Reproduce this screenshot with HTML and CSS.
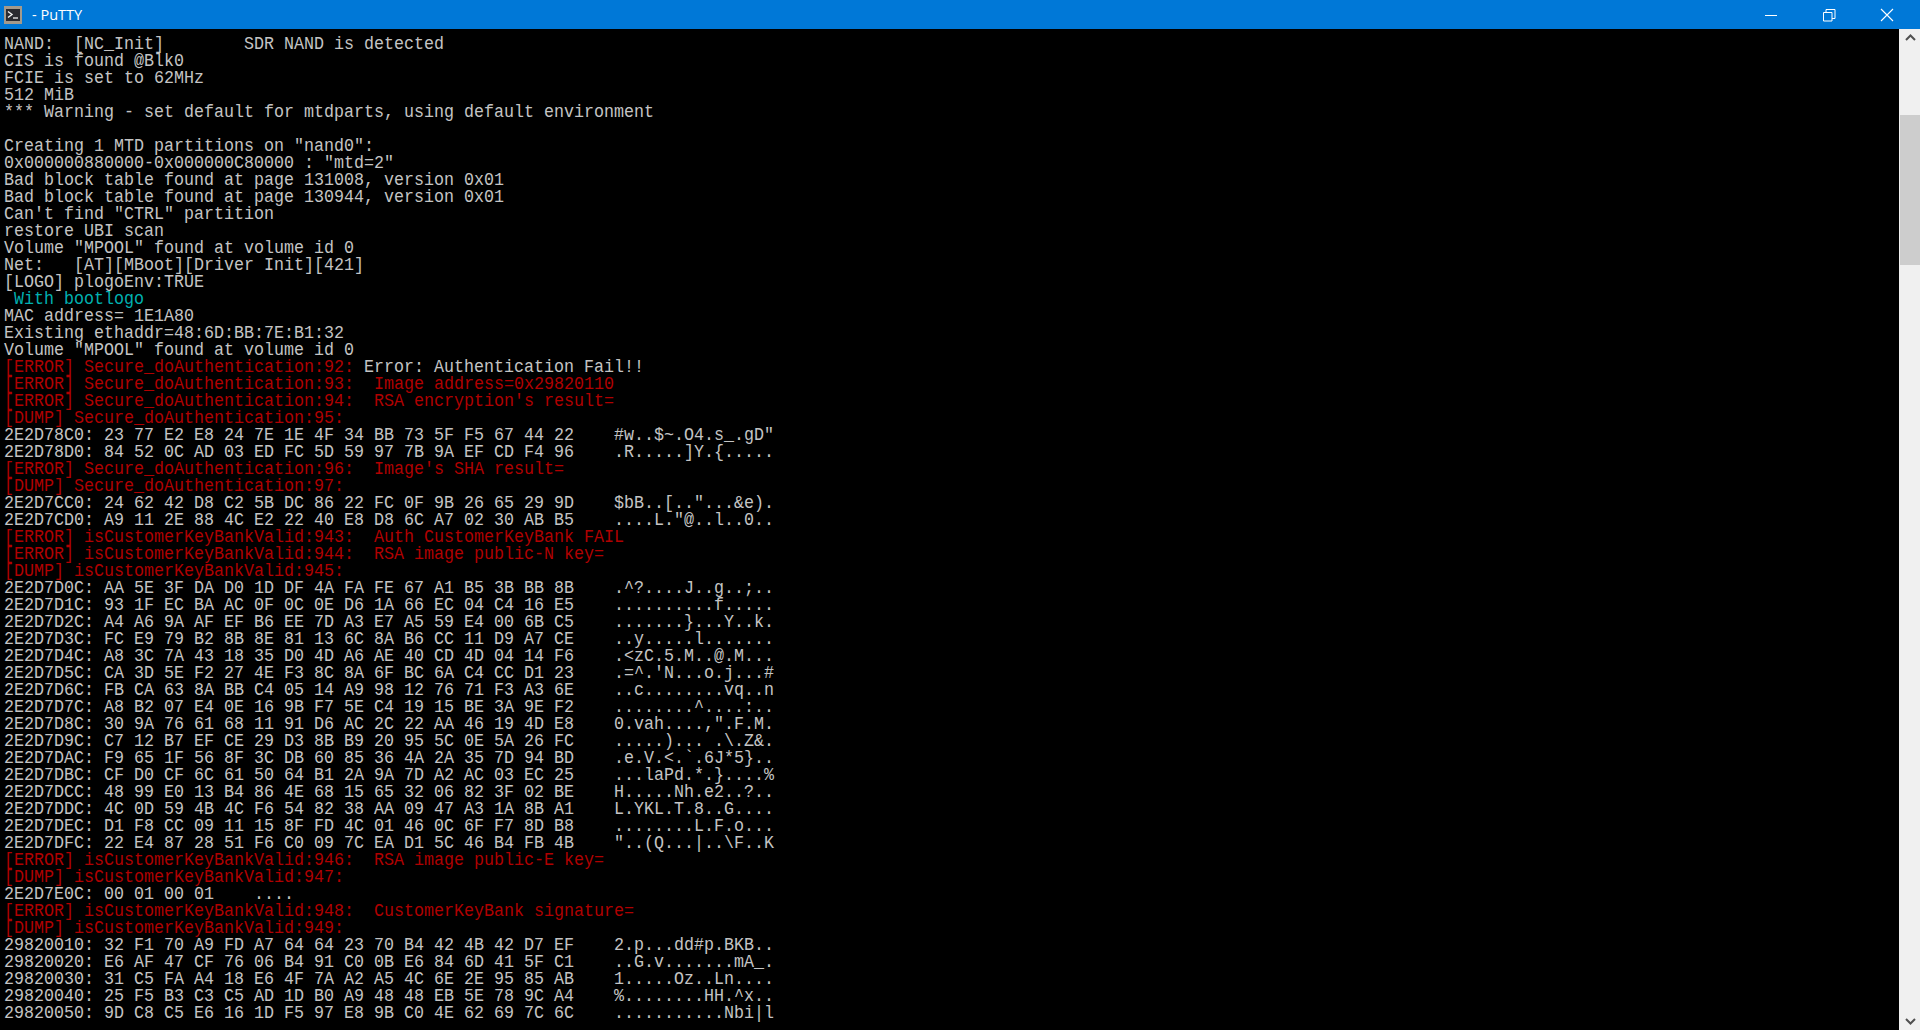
FILE: index.html
```html
<!DOCTYPE html>
<html lang="en">
<head>
<meta charset="utf-8">
<title>- PuTTY</title>
<link rel="stylesheet" href="styles.css">
</head>
<body>
<div class="window">
<header class="titlebar">
<svg class="app-icon" width="18" height="18" viewBox="0 0 18 18"><rect x="0" y="0" width="18" height="18" fill="#a39a8c"/><rect x="2" y="3" width="14" height="12" fill="#2a2a30"/><path d="M4 5.500 8 8.500 4 11.500" fill="none" stroke="#f2f2f2" stroke-width="1.4"/><path d="M9 12h5" stroke="#f2f2f2" stroke-width="1.3"/></svg>
<span class="title">- PuTTY</span>
<div class="controls">
<button class="ctl"><svg width="14" height="14" viewBox="0 0 14 14"><path d="M1 7.500h12" stroke="#fff" fill="none"/></svg></button>
<button class="ctl"><svg width="14" height="14" viewBox="0 0 14 14"><path d="M1.500 4.500h8.500v8.500h-8.500zM4 4.500V1.500h9v9h-3" stroke="#fff" fill="none"/></svg></button>
<button class="ctl"><svg width="14" height="14" viewBox="0 0 14 14"><path d="M1 1l12 12M13 1 1 13" stroke="#fff" stroke-width="1.1" fill="none"/></svg></button>
</div>
</header>
<main class="body">
<pre class="term">NAND:  [NC_Init]        SDR NAND is detected
CIS is found @Blk0
FCIE is set to 62MHz
512 MiB
*** Warning - set default for mtdparts, using default environment

Creating 1 MTD partitions on "nand0":
0x000000880000-0x000000C80000 : "mtd=2"
Bad block table found at page 131008, version 0x01
Bad block table found at page 130944, version 0x01
Can't find "CTRL" partition
restore UBI scan
Volume "MPOOL" found at volume id 0
Net:   [AT][MBoot][Driver Init][421]
[LOGO] plogoEnv:TRUE
<span class="cyan"> With bootlogo</span>
MAC address= 1E1A80
Existing ethaddr=48:6D:BB:7E:B1:32
Volume "MPOOL" found at volume id 0
<span class="red">[ERROR] Secure_doAuthentication:92:</span> Error: Authentication Fail!!
<span class="red">[ERROR] Secure_doAuthentication:93:  Image address=0x29820110</span>
<span class="red">[ERROR] Secure_doAuthentication:94:  RSA encryption's result=</span>
<span class="red">[DUMP] Secure_doAuthentication:95:</span>
2E2D78C0: 23 77 E2 E8 24 7E 1E 4F 34 BB 73 5F F5 67 44 22    #w..$~.O4.s_.gD"
2E2D78D0: 84 52 0C AD 03 ED FC 5D 59 97 7B 9A EF CD F4 96    .R.....]Y.{.....
<span class="red">[ERROR] Secure_doAuthentication:96:  Image's SHA result=</span>
<span class="red">[DUMP] Secure_doAuthentication:97:</span>
2E2D7CC0: 24 62 42 D8 C2 5B DC 86 22 FC 0F 9B 26 65 29 9D    $bB..[.."...&amp;e).
2E2D7CD0: A9 11 2E 88 4C E2 22 40 E8 D8 6C A7 02 30 AB B5    ....L."@..l..0..
<span class="red">[ERROR] isCustomerKeyBankValid:943:  Auth CustomerKeyBank FAIL</span>
<span class="red">[ERROR] isCustomerKeyBankValid:944:  RSA image public-N key=</span>
<span class="red">[DUMP] isCustomerKeyBankValid:945:</span>
2E2D7D0C: AA 5E 3F DA D0 1D DF 4A FA FE 67 A1 B5 3B BB 8B    .^?....J..g..;..
2E2D7D1C: 93 1F EC BA AC 0F 0C 0E D6 1A 66 EC 04 C4 16 E5    ..........f.....
2E2D7D2C: A4 A6 9A AF EF B6 EE 7D A3 E7 A5 59 E4 00 6B C5    .......}...Y..k.
2E2D7D3C: FC E9 79 B2 8B 8E 81 13 6C 8A B6 CC 11 D9 A7 CE    ..y.....l.......
2E2D7D4C: A8 3C 7A 43 18 35 D0 4D A6 AE 40 CD 4D 04 14 F6    .&lt;zC.5.M..@.M...
2E2D7D5C: CA 3D 5E F2 27 4E F3 8C 8A 6F BC 6A C4 CC D1 23    .=^.'N...o.j...#
2E2D7D6C: FB CA 63 8A BB C4 05 14 A9 98 12 76 71 F3 A3 6E    ..c........vq..n
2E2D7D7C: A8 B2 07 E4 0E 16 9B F7 5E C4 19 15 BE 3A 9E F2    ........^....:..
2E2D7D8C: 30 9A 76 61 68 11 91 D6 AC 2C 22 AA 46 19 4D E8    0.vah....,".F.M.
2E2D7D9C: C7 12 B7 EF CE 29 D3 8B B9 20 95 5C 0E 5A 26 FC    .....)... .\.Z&amp;.
2E2D7DAC: F9 65 1F 56 8F 3C DB 60 85 36 4A 2A 35 7D 94 BD    .e.V.&lt;.`.6J*5}..
2E2D7DBC: CF D0 CF 6C 61 50 64 B1 2A 9A 7D A2 AC 03 EC 25    ...laPd.*.}....%
2E2D7DCC: 48 99 E0 13 B4 86 4E 68 15 65 32 06 82 3F 02 BE    H.....Nh.e2..?..
2E2D7DDC: 4C 0D 59 4B 4C F6 54 82 38 AA 09 47 A3 1A 8B A1    L.YKL.T.8..G....
2E2D7DEC: D1 F8 CC 09 11 15 8F FD 4C 01 46 0C 6F F7 8D B8    ........L.F.o...
2E2D7DFC: 22 E4 87 28 51 F6 C0 09 7C EA D1 5C 46 B4 FB 4B    "..(Q...|..\F..K
<span class="red">[ERROR] isCustomerKeyBankValid:946:  RSA image public-E key=</span>
<span class="red">[DUMP] isCustomerKeyBankValid:947:</span>
2E2D7E0C: 00 01 00 01    ....
<span class="red">[ERROR] isCustomerKeyBankValid:948:  CustomerKeyBank signature=</span>
<span class="red">[DUMP] isCustomerKeyBankValid:949:</span>
29820010: 32 F1 70 A9 FD A7 64 64 23 70 B4 42 4B 42 D7 EF    2.p...dd#p.BKB..
29820020: E6 AF 47 CF 76 06 B4 91 C0 0B E6 84 6D 41 5F C1    ..G.v.......mA_.
29820030: 31 C5 FA A4 18 E6 4F 7A A2 A5 4C 6E 2E 95 85 AB    1.....Oz..Ln....
29820040: 25 F5 B3 C3 C5 AD 1D B0 A9 48 48 EB 5E 78 9C A4    %........HH.^x..
29820050: 9D C8 C5 E6 16 1D F5 97 E8 9B C0 4E 62 69 7C 6C    ...........Nbi|l</pre>
<aside class="scrollbar">
<div class="arrow"><svg width="11" height="7" viewBox="0 0 11 7"><path d="M1 6 5.500 1.500 10 6" fill="none" stroke="#505050" stroke-width="2"/></svg></div>
<div class="thumb"></div>
<div class="spacer"></div>
<div class="arrow"><svg width="11" height="7" viewBox="0 0 11 7"><path d="M1 1 5.500 5.500 10 1" fill="none" stroke="#505050" stroke-width="2"/></svg></div>
</aside>
</main>
</div>
</body>
</html>
```
FILE: styles.css
```css
html, body {
  margin: 0;
  height: 100%;
  overflow: hidden;
  background: #000;
}
.window {
  display: flex;
  flex-direction: column;
  height: 1030px;
}
.titlebar {
  flex: none;
  height: 29px;
  display: flex;
  align-items: center;
  background: #0078d7;
  color: #fff;
  font-family: "Open Sans", "Noto Sans", sans-serif;
  font-size: 14.5px;
}
.app-icon {
  margin-left: 4px;
  flex: none;
}
.title {
  margin-left: 10px;
}
.controls {
  margin-left: auto;
  margin-right: 4px;
  display: flex;
}
.ctl {
  width: 58px;
  height: 29px;
  padding: 0;
  border: 0;
  background: transparent;
  display: flex;
  align-items: center;
  justify-content: center;
}
.body {
  flex: 1;
  min-height: 0;
  display: flex;
}
.term {
  flex: 1;
  margin: 0;
  padding: 7px 0 0 4.3px;
  overflow: hidden;
  color: #c4c4c4;
  background: #000;
  font-family: "Liberation Mono", "DejaVu Sans Mono", monospace;
  font-size: 18px;
  line-height: 17px;
  transform: scaleX(0.9259);
  transform-origin: 0 0;
}
.red {
  color: #b00000;
}
.cyan {
  color: #00b0b0;
}
.scrollbar {
  flex: none;
  width: 21px;
  display: flex;
  flex-direction: column;
  box-sizing: border-box;
  padding-left: 1px;
  background: #f0f0f0;
}
.arrow {
  flex: none;
  height: 17px;
  display: flex;
  align-items: center;
  justify-content: center;
}
.thumb {
  flex: none;
  height: 150px;
  margin-top: 69px;
  background: #cdcdcd;
}
.spacer {
  flex: 1;
}
```
